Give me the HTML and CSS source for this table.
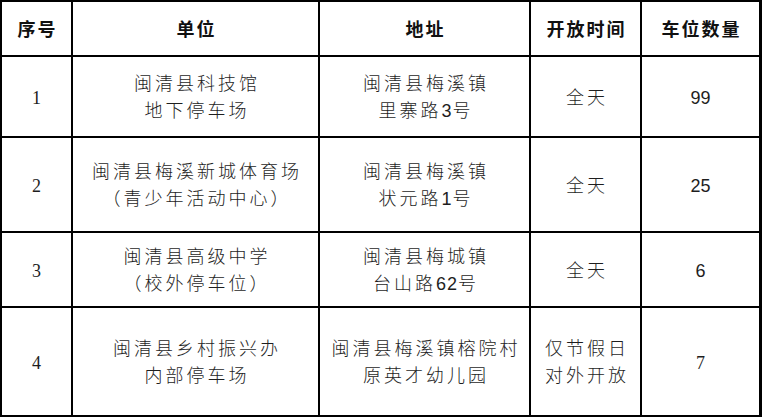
FILE: index.html
```html
<!DOCTYPE html>
<html lang="zh-CN">
<head>
<meta charset="utf-8">
<title>停车场开放信息</title>
<link rel="stylesheet" href="styles.css">
</head>
<body>
<div class="grid">
  <div class="cell head"><p>序号</p></div>
  <div class="cell head"><p>单位</p></div>
  <div class="cell head"><p>地址</p></div>
  <div class="cell head"><p>开放时间</p></div>
  <div class="cell head"><p>车位数量</p></div>

  <div class="cell num"><p>1</p></div>
  <div class="cell"><p>闽清县科技馆<br>地下停车场</p></div>
  <div class="cell"><p>闽清县梅溪镇<br>里寨路<span class="dg">3</span>号</p></div>
  <div class="cell"><p>全天</p></div>
  <div class="cell cnt"><p>99</p></div>

  <div class="cell num"><p>2</p></div>
  <div class="cell"><p>闽清县梅溪新城体育场<br>（青少年活动中心）</p></div>
  <div class="cell"><p>闽清县梅溪镇<br>状元路<span class="dg">1</span>号</p></div>
  <div class="cell"><p>全天</p></div>
  <div class="cell cnt"><p>25</p></div>

  <div class="cell num"><p>3</p></div>
  <div class="cell"><p>闽清县高级中学<br>（校外停车位）</p></div>
  <div class="cell"><p>闽清县梅城镇<br>台山路<span class="dg">62</span>号</p></div>
  <div class="cell"><p>全天</p></div>
  <div class="cell cnt"><p>6</p></div>

  <div class="cell num"><p>4</p></div>
  <div class="cell"><p>闽清县乡村振兴办<br>内部停车场</p></div>
  <div class="cell"><p>闽清县梅溪镇榕院村<br>原英才幼儿园</p></div>
  <div class="cell"><p>仅节假日<br>对外开放</p></div>
  <div class="cell num"><p>7</p></div>
</div>
</body>
</html>
```
FILE: styles.css
```css
html, body {
  margin: 0;
  padding: 0;
  background: #ffffff;
}

.grid {
  display: grid;
  grid-template-columns: 69px 245px 209px 109px 117px;
  grid-template-rows: 53px 79px 93px 73px 107px;
  gap: 2px;
  padding: 2px;
  width: 762px;
  box-sizing: border-box;
  background: #000000;
  font-family: "Liberation Sans", "Noto Sans CJK SC", sans-serif;
  font-size: 18px;
  color: #1e1e1e;
}

.cell {
  background: #ffffff;
  display: flex;
  align-items: center;
  justify-content: center;
  text-align: center;
  line-height: 27px;
  letter-spacing: 3px;
  font-weight: 300;
  padding-top: 3px;
  padding-left: 3px;
  box-sizing: border-box;
}

.cell p {
  margin: 0;
}

.dg {
  letter-spacing: 1px;
}

.head {
  font-weight: 700;
  letter-spacing: 2px;
  padding-left: 2px;
  color: #111111;
  padding-top: 4px;
}

.num {
  font-family: "Liberation Serif", "Noto Sans CJK SC", serif;
  letter-spacing: 0;
  padding-left: 0;
  font-weight: 400;
}

.cnt {
  letter-spacing: 0;
  padding-left: 0;
  font-weight: 400;
}
```
